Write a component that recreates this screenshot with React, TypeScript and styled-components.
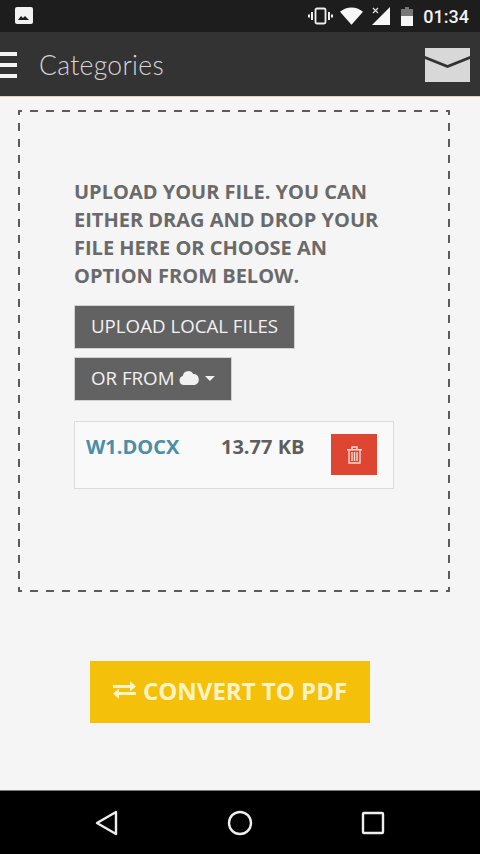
import React from 'react';
import styled, {createGlobalStyle} from 'styled-components';

const GlobalStyle = createGlobalStyle`
  html, body {
    margin: 0;
    padding: 0;
    background: #f5f5f5;
  }
  * { box-sizing: border-box; }
`

const Page = styled.div`
  width: 480px;
  height: 854px;
  display: flex;
  flex-direction: column;
  overflow: hidden;
  font-family: "Open Sans", "Liberation Sans", sans-serif;
`

const StatusBar = styled.div`
  height: 32px;
  flex-shrink: 0;
  display: flex;
  align-items: center;
  justify-content: space-between;
  padding: 0 11px 0 15px;
  background: #1d1d1d;
`

const StatusIcons = styled.div`
  display: flex;
  align-items: center;
`

const StatusGlyph = styled.svg<{$left?: number}>`
  display: block;
  margin-left: ${p => p.$left || 0}px;
`

const Clock = styled.span`
  margin-left: 10px;
  font-family: Roboto, sans-serif;
  font-size: 18px;
  font-weight: 500;
  color: #f2f2f2;
`

const AppBar = styled.div`
  height: 65px;
  flex-shrink: 0;
  display: flex;
  align-items: center;
  padding: 0 10px 0 0;
  background: #333333;
  border-bottom: 1px solid #e6cdb0;
`

const Burger = styled.div`
  width: 17px;
  height: 26px;
  margin-top: 2px;
  display: flex;
  flex-direction: column;
  justify-content: space-between;
  > i {
    display: block;
    height: 4px;
    background: #f4f4f4;
  }
`

const Title = styled.div`
  margin: 2px 0 0 22px;
  flex-grow: 1;
  font-family: Lato, sans-serif;
  font-weight: 300;
  font-size: 26.5px;
  letter-spacing: 0.3px;
  color: #d6d6d6;
`

const MailIcon = styled.svg`
  margin-top: 1px;
`

const Main = styled.div`
  flex-grow: 1;
  background: #f5f5f5;
  padding: 13px 30px 0 18px;
  display: flex;
  flex-direction: column;
`

// the dashes are spaced wider than a css dashed border gives
const DropZone = styled.div`
  height: 482px;
  padding: 68px 56px 0;
  background-image:
    linear-gradient(to right, #5c5c5c 8px, transparent 8px),
    linear-gradient(to right, #5c5c5c 8px, transparent 8px),
    linear-gradient(to bottom, #5c5c5c 8px, transparent 8px),
    linear-gradient(to bottom, #5c5c5c 8px, transparent 8px);
  background-size: 16px 2px, 16px 2px, 2px 16px, 2px 16px;
  background-position: 12px 0, 12px 100%, 0 13px, 100% 13px;
  background-repeat: repeat-x, repeat-x, repeat-y, repeat-y;
`

const Hint = styled.p`
  margin: 0 0 15px;
  font-size: 20px;
  line-height: 28px;
  font-weight: 700;
  color: #6a6a6a;
  text-transform: uppercase;
`

const GreyButton = styled.button<{$width: number}>`
  display: flex;
  align-items: center;
  width: ${p => p.$width}px;
  height: 44px;
  margin-bottom: 8px;
  padding: 0 16px 4px;
  border: 1px solid #d2d2d2;
  border-radius: 0;
  background: #626262;
  color: #f2f2f2;
  font-family: inherit;
  font-size: 18.7px;
  white-space: nowrap;
`

const CloudIcon = styled.svg`
  margin-left: 5px;
`

const Caret = styled.svg`
  margin: 2px 0 0 5px;
`

const FileCard = styled.div`
  width: 320px;
  height: 68px;
  margin-top: 20px;
  display: flex;
  align-items: flex-start;
  padding: 12px 16px 0 11px;
  border: 1px solid #dcdcdc;
  background: #f9f9f9;
`

const FileName = styled.span`
  width: 135px;
  font-size: 20px;
  line-height: 25px;
  font-weight: 700;
  color: #4a8ea8;
`

const FileSize = styled.span`
  flex-grow: 1;
  font-size: 20px;
  line-height: 25px;
  font-weight: 700;
  color: #5e5e5e;
`

const DeleteButton = styled.button`
  width: 46px;
  height: 41px;
  display: flex;
  align-items: center;
  justify-content: center;
  padding: 0;
  border: none;
  background: #df4632;
`

const ConvertRow = styled.div`
  display: flex;
  margin: 69px 0 0 72px;
`

const ConvertButton = styled.button`
  width: 280px;
  height: 62px;
  display: flex;
  align-items: center;
  justify-content: center;
  gap: 7px;
  padding: 0 0 4px;
  border: none;
  background: #f5c00a;
  color: #fdf3c4;
  font-family: inherit;
  font-size: 24px;
  font-weight: 700;
  white-space: nowrap;
`

const NavBar = styled.div`
  height: 64px;
  flex-shrink: 0;
  display: grid;
  grid-template-columns: repeat(3, 133px);
  justify-content: center;
  justify-items: center;
  align-items: center;
  background: #000;
  border-top: 1px solid #777;
`

function App() {
  return (
    <Page>
      <GlobalStyle/>
      <StatusBar>
        <svg width="18" height="18" viewBox="0 0 18 18">
          <rect x="0" y="0" width="18" height="17" rx="2" fill="#f2f2f2"/>
          <path d="M3 13l3-4 2 2 2-2 4 4z" fill="#1d1d1d"/>
        </svg>
        <StatusIcons>
          <StatusGlyph width="25" height="18" viewBox="0 0 25 18" fill="none" stroke="#f0f0f0">
            <rect x="7.5" y="1.5" width="10" height="15" rx="1.5" strokeWidth="1.8"/>
            <path d="M4 5v8M21 5v8" strokeWidth="2"/>
            <path d="M1 7.5v3M24 7.5v3" strokeWidth="2"/>
          </StatusGlyph>
          <StatusGlyph $left={7} width="23" height="18" viewBox="0 0 24 18">
            <path d="M0 4.5C7-1.5 17-1.5 24 4.5L12 18z" fill="#f6f6f6"/>
          </StatusGlyph>
          <StatusGlyph $left={9} width="18" height="18" viewBox="0 0 18 18">
            <path d="M18 0v18H0z" fill="#f6f6f6"/>
            <path d="M1 1l5 5M6 1L1 6" stroke="#e0e0e0" strokeWidth="1.2"/>
          </StatusGlyph>
          <StatusGlyph $left={11} width="12" height="19" viewBox="0 0 12 19">
            <path d="M4 0h4v2h4v7H0V2h4z" fill="#777"/>
            <rect x="0" y="9" width="12" height="10" fill="#f6f6f6"/>
          </StatusGlyph>
          <Clock>01:34</Clock>
        </StatusIcons>
      </StatusBar>
      <AppBar>
        <Burger><i/><i/><i/></Burger>
        <Title>Categories</Title>
        <MailIcon width="45" height="34" viewBox="0 0 45 34">
          <path d="M0 0h45v8L22.5 17 0 8z" fill="#d8d8d8"/>
          <path d="M0 11l22.5 9L45 11v23H0z" fill="#d8d8d8"/>
        </MailIcon>
      </AppBar>
      <Main>
        <DropZone>
          <Hint>Upload your file. You can either drag and drop your file here or choose an option from below.</Hint>
          <GreyButton $width={221}>UPLOAD LOCAL FILES</GreyButton>
          <GreyButton $width={158}>
            OR FROM
            <CloudIcon width="21" height="15" viewBox="0 0 21 15">
              <path d="M5 15a4.6 4.6 0 0 1-1.2-9A5.8 5.8 0 0 1 14.6 4 5.6 5.6 0 0 1 16 15z" fill="#f2f2f2"/>
            </CloudIcon>
            <Caret width="10" height="5" viewBox="0 0 10 5">
              <path d="M0 0h10L5 5z" fill="#f2f2f2"/>
            </Caret>
          </GreyButton>
          <FileCard>
            <FileName>W1.DOCX</FileName>
            <FileSize>13.77 KB</FileSize>
            <DeleteButton>
              <svg width="15" height="18" viewBox="0 0 15 18" fill="none" stroke="#f8dcd3" strokeWidth="1.4">
                <path d="M0 3.7h15M5 3.5V1h5v2.5"/>
                <path d="M2 4v13h11V4"/>
                <path d="M5 6v9M7.5 6v9M10 6v9"/>
              </svg>
            </DeleteButton>
          </FileCard>
        </DropZone>
        <ConvertRow>
          <ConvertButton>
            <svg width="23" height="18" viewBox="0 0 23 18" fill="#fdf3c4">
              <path d="M0 4h17V0l6 5.5-6 5V7H0z"/>
              <path d="M23 11H6V7.5l-6 5 6 5.5v-4h17z"/>
            </svg>
            CONVERT TO PDF
          </ConvertButton>
        </ConvertRow>
      </Main>
      <NavBar>
        <svg width="24" height="26" viewBox="0 0 24 26" fill="none" stroke="#eee" strokeWidth="2.4" strokeLinejoin="round">
          <path d="M21 2v22L2 13z"/>
        </svg>
        <svg width="26" height="26" viewBox="0 0 26 26" fill="none" stroke="#eee" strokeWidth="2.4">
          <circle cx="13" cy="13" r="11"/>
        </svg>
        <svg width="24" height="24" viewBox="0 0 24 24" fill="none" stroke="#eee" strokeWidth="2.4" strokeLinejoin="round">
          <rect x="2" y="2" width="20" height="20" rx="1"/>
        </svg>
      </NavBar>
    </Page>
  );
}

export default App
